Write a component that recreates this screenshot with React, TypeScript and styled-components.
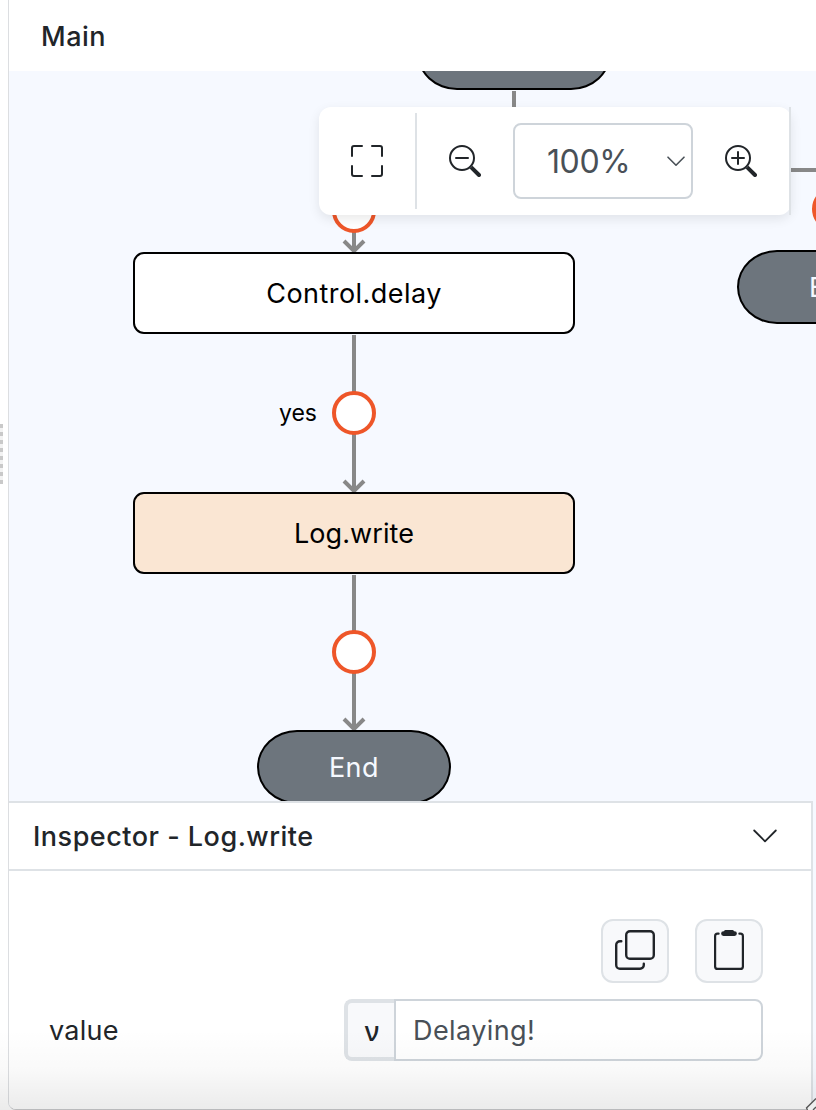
import React from "react";
import styled, { createGlobalStyle } from "styled-components";
import { BsFullscreen, BsZoomIn, BsZoomOut } from "react-icons/bs";

const GlobalStyle = createGlobalStyle`
  *, *::before, *::after { box-sizing: border-box; }
  html, body { margin: 0; padding: 0; }
  body {
    background: #fff;
    color: #212529;
    font-family: Inter, "Liberation Sans", sans-serif;
    overflow: hidden;
  }
`;

const Page = styled.div`
  display: flex;
  width: 816px;
  height: 1110px;
  position: relative;
  overflow: hidden;
`;

const Gutter = styled.div`
  width: 8px;
  flex: none;
  display: flex;
  flex-direction: column;
  padding-top: 424px;
`;

const Grip = styled.div`
  width: 3px;
  height: 60px;
  background: repeating-linear-gradient(#c9c9c9 0 4px, #f3f3f3 4px 8px);
`;

const Workspace = styled.main`
  flex: 1;
  min-width: 0;
  display: flex;
  flex-direction: column;
  border-left: 1px solid #dcdee1;
  border-bottom: 1px solid #c9cacc;
  border-bottom-left-radius: 8px;
  overflow: hidden;
`;

const Header = styled.header`
  height: 71px;
  flex: none;
  padding: 2px 32px 0;
  display: flex;
  align-items: center;
  background: #fff;
`;

const Title = styled.h1`
  margin: 0;
  font-size: 27px;
  line-height: 34px;
  font-weight: 500;
  letter-spacing: 0.5px;
  white-space: nowrap;
`;

const Canvas = styled.section`
  position: relative;
  height: 730px;
  flex: none;
  overflow: hidden;
  background: #f6f9ff;
`;

const Edges = styled.svg`
  position: absolute;
  left: 0;
  top: 0;
`;

const Node = styled.div<{ $y: number; $selected?: boolean }>`
  position: absolute;
  left: 124px;
  top: ${(p) => p.$y}px;
  width: 442px;
  height: 82px;
  display: flex;
  align-items: center;
  justify-content: center;
  border: 2px solid #000;
  border-radius: 11px;
  background: ${(p) => (p.$selected ? "#fae6d3" : "#fff")};
  color: #000;
  font-size: 27px;
  letter-spacing: ${(p) => (p.$selected ? 0.1 : 0.45)}px;
`;

const Terminal = styled.div<{ $x: number; $y: number }>`
  position: absolute;
  left: ${(p) => p.$x}px;
  top: ${(p) => p.$y}px;
  width: 194px;
  height: 74px;
  display: flex;
  align-items: center;
  justify-content: center;
  border: 2px solid #000;
  border-radius: 40px / 37px;
  background: #6d757d;
  color: #f6f9ff;
  font-size: 27px;
  letter-spacing: 0.5px;
`;

const Port = styled.div<{ $x: number; $y: number }>`
  position: absolute;
  left: ${(p) => p.$x - 22}px;
  top: ${(p) => p.$y - 22}px;
  width: 44px;
  height: 44px;
  border: 4px solid #ee5629;
  border-radius: 50%;
  background: #fff;
`;

const EdgeLabel = styled.span`
  position: absolute;
  right: 499px;
  top: 328px;
  line-height: 28px;
  font-size: 23px;
  color: #000;
`;

const Toolbar = styled.div`
  position: absolute;
  left: 310px;
  top: 36px;
  width: 472px;
  height: 108px;
  display: flex;
  align-items: center;
  background: #fff;
  border-radius: 12px;
  box-shadow: 0 4px 12px rgba(0, 0, 0, 0.09);

  &::after {
    content: "";
    position: absolute;
    right: 0;
    top: 0;
    width: 2px;
    height: 100%;
    background: #dee2e6;
  }
`;

const ToolButton = styled.button`
  width: 96px;
  height: 96px;
  padding: 0;
  border: 0;
  background: none;
  color: #212529;
  display: flex;
  align-items: center;
  justify-content: center;
  font-size: 32px;
`;

const Divider = styled.div`
  width: 2px;
  height: 96px;
  background: #dee2e6;
`;

const ZoomSelect = styled.div`
  width: 180px;
  height: 76px;
  padding: 0 5px 0 32px;
  border: 2px solid #ced4da;
  border-radius: 8px;
  display: flex;
  align-items: center;
  justify-content: space-between;
  color: #495057;
  font-size: 32px;
  letter-spacing: -0.4px;
`;

const Dock = styled.div`
  flex: 1;
  display: flex;
  padding-right: 3px;
  background: #f6f9ff;
`;

const Inspector = styled.section`
  flex: 1;
  display: flex;
  flex-direction: column;
  background: #fff;
  border-top: 2px solid #dee2e6;
  border-right: 2px solid #dee2e6;
`;

const InspectorHeader = styled.div`
  height: 68px;
  display: flex;
  align-items: center;
  justify-content: space-between;
  padding: 2px 33px 0 24px;
  border-bottom: 2px solid #dee2e6;
`;

const Actions = styled.div`
  display: flex;
  justify-content: flex-end;
  gap: 26px;
  padding: 48px 48px 0 0;
`;

const ActionButton = styled.button`
  width: 68px;
  height: 64px;
  padding: 0 0 2px;
  border: 2px solid #dee2e6;
  border-radius: 12px;
  background: #f8f9fb;
  color: #212529;
  display: flex;
  align-items: center;
  justify-content: center;
`;

const Field = styled.div`
  display: flex;
  align-items: center;
  margin-top: 16px;
  padding: 0 48px 0 40px;
`;

const FieldLabel = styled.label`
  width: 295px;
  font-size: 27px;
  letter-spacing: 0.25px;
`;

const FieldKind = styled.span`
  width: 50px;
  height: 62px;
  border: 4px solid #dee2e6;
  border-right-width: 0;
  border-radius: 8px 0 0 8px;
  background: #f8f9fb;
  display: flex;
  align-items: center;
  justify-content: center;
  padding-left: 2px;
  font-family: "Noto Sans", sans-serif;
  font-weight: 500;
  font-size: 27px;
`;

const FieldValue = styled.div`
  flex: 1;
  height: 62px;
  padding-left: 17px;
  border: 2px solid #ced4da;
  border-radius: 0 8px 8px 0;
  display: flex;
  align-items: center;
  background: #fff;
  color: #495057;
  font-size: 27px;
  letter-spacing: 0.4px;
`;

const Fade = styled.div`
  position: absolute;
  inset: auto 0 0 0;
  height: 80px;
  background: linear-gradient(rgba(0, 0, 0, 0), rgba(0, 0, 0, 0.025) 50%, rgba(0, 0, 0, 0.08));
  pointer-events: none;
`;

const ResizeCorner = styled.svg`
  position: absolute;
  right: 0;
  bottom: 0;
`;

const lines = { fill: "none", stroke: "currentColor", strokeLinecap: "round", strokeLinejoin: "round" } as const;

const Copy = () => (
  <svg width="40" height="40" viewBox="0 0 40 40" {...lines} strokeWidth="2.4">
    <rect x="11.2" y="1.2" width="27.6" height="27.6" rx="3.8" />
    <path d="M6.3 11.2H5A3.8 3.8 0 0 0 1.2 15v20A3.8 3.8 0 0 0 5 38.8h20a3.8 3.8 0 0 0 3.8-3.8v-1.3" />
  </svg>
);

const Clipboard = () => (
  <svg width="40" height="40" viewBox="0 0 40 40" {...lines} strokeWidth="2.2">
    <path d="M9.6 3.7H8.6a2.5 2.5 0 0 0-2.500 2.500v30.200a2.500 2.500 0 0 0 2.500 2.500h22.800a2.500 2.500 0 0 0 2.500-2.500V6.200a2.500 2.500 0 0 0-2.500-2.500h-1" />
    <path d="M16.500 0h7q1 0 1.500 1.200h.5a2.400 2.400 0 0 1 0 4.800h-11a2.400 2.400 0 0 1 0-4.800h.5Q15.500 0 16.500 0Z" fill="currentColor" stroke="none" />
  </svg>
);

function Flow() {
  return (
    <Canvas>
      <Edges width="807" height="730" fill="none" stroke="#888" strokeWidth="4">
        <path d="M505 20V60M782 99H807M345 140V180M345 264V420M345 504V658" />
        <path d="M335 170l10 10 10-10M335 410l10 10 10-10M335 648l10 10 10-10" />
      </Edges>
      <Terminal $x={408} $y={-55} />
      <Port $x={345} $y={140} />
      <Node $y={181}>Control.delay</Node>
      <Port $x={345} $y={342} />
      <EdgeLabel>yes</EdgeLabel>
      <Node $y={421} $selected>Log.write</Node>
      <Port $x={345} $y={581} />
      <Terminal $x={248} $y={659}>End</Terminal>
      <Port $x={825} $y={138} />
      <Terminal $x={728} $y={179}>End</Terminal>
      <Toolbar>
        <ToolButton aria-label="Fit to screen"><BsFullscreen /></ToolButton>
        <Divider />
        <ToolButton aria-label="Zoom out"><BsZoomOut /></ToolButton>
        <ZoomSelect>
          100%
          <svg width="20" height="20" viewBox="0 0 20 20" {...lines} strokeWidth="1.6">
            <path d="M2 6.200l8 8 8-8" />
          </svg>
        </ZoomSelect>
        <ToolButton aria-label="Zoom in"><BsZoomIn /></ToolButton>
      </Toolbar>
    </Canvas>
  );
}

export default function App() {
  return (
    <Page>
      <GlobalStyle />
      <Gutter><Grip /></Gutter>
      <Workspace>
        <Header><Title>Main</Title></Header>
        <Flow />
        <Dock>
          <Inspector>
            <InspectorHeader>
              <Title>Inspector - Log.write</Title>
              <svg width="26" height="26" viewBox="0 0 26 26" {...lines} strokeWidth="1.8">
                <path d="M2.200 6.500L13 17.300 23.800 6.500" />
              </svg>
            </InspectorHeader>
            <Actions>
              <ActionButton aria-label="Copy"><Copy /></ActionButton>
              <ActionButton aria-label="Paste"><Clipboard /></ActionButton>
            </Actions>
            <Field>
              <FieldLabel>value</FieldLabel>
              <FieldKind>ν</FieldKind>
              <FieldValue>Delaying!</FieldValue>
            </Field>
          </Inspector>
        </Dock>
      </Workspace>
      <Fade />
      <ResizeCorner width="11" height="13" viewBox="0 0 11 13" fill="none" stroke="#555" strokeWidth="1.3">
        <path d="M2 13L1.500 11.500 11 2V13Z" fill="#eee" stroke="none" />
        <path d="M2.500 13L1.500 11 11 1.500M8 13l3-3" />
      </ResizeCorner>
    </Page>
  );
}
